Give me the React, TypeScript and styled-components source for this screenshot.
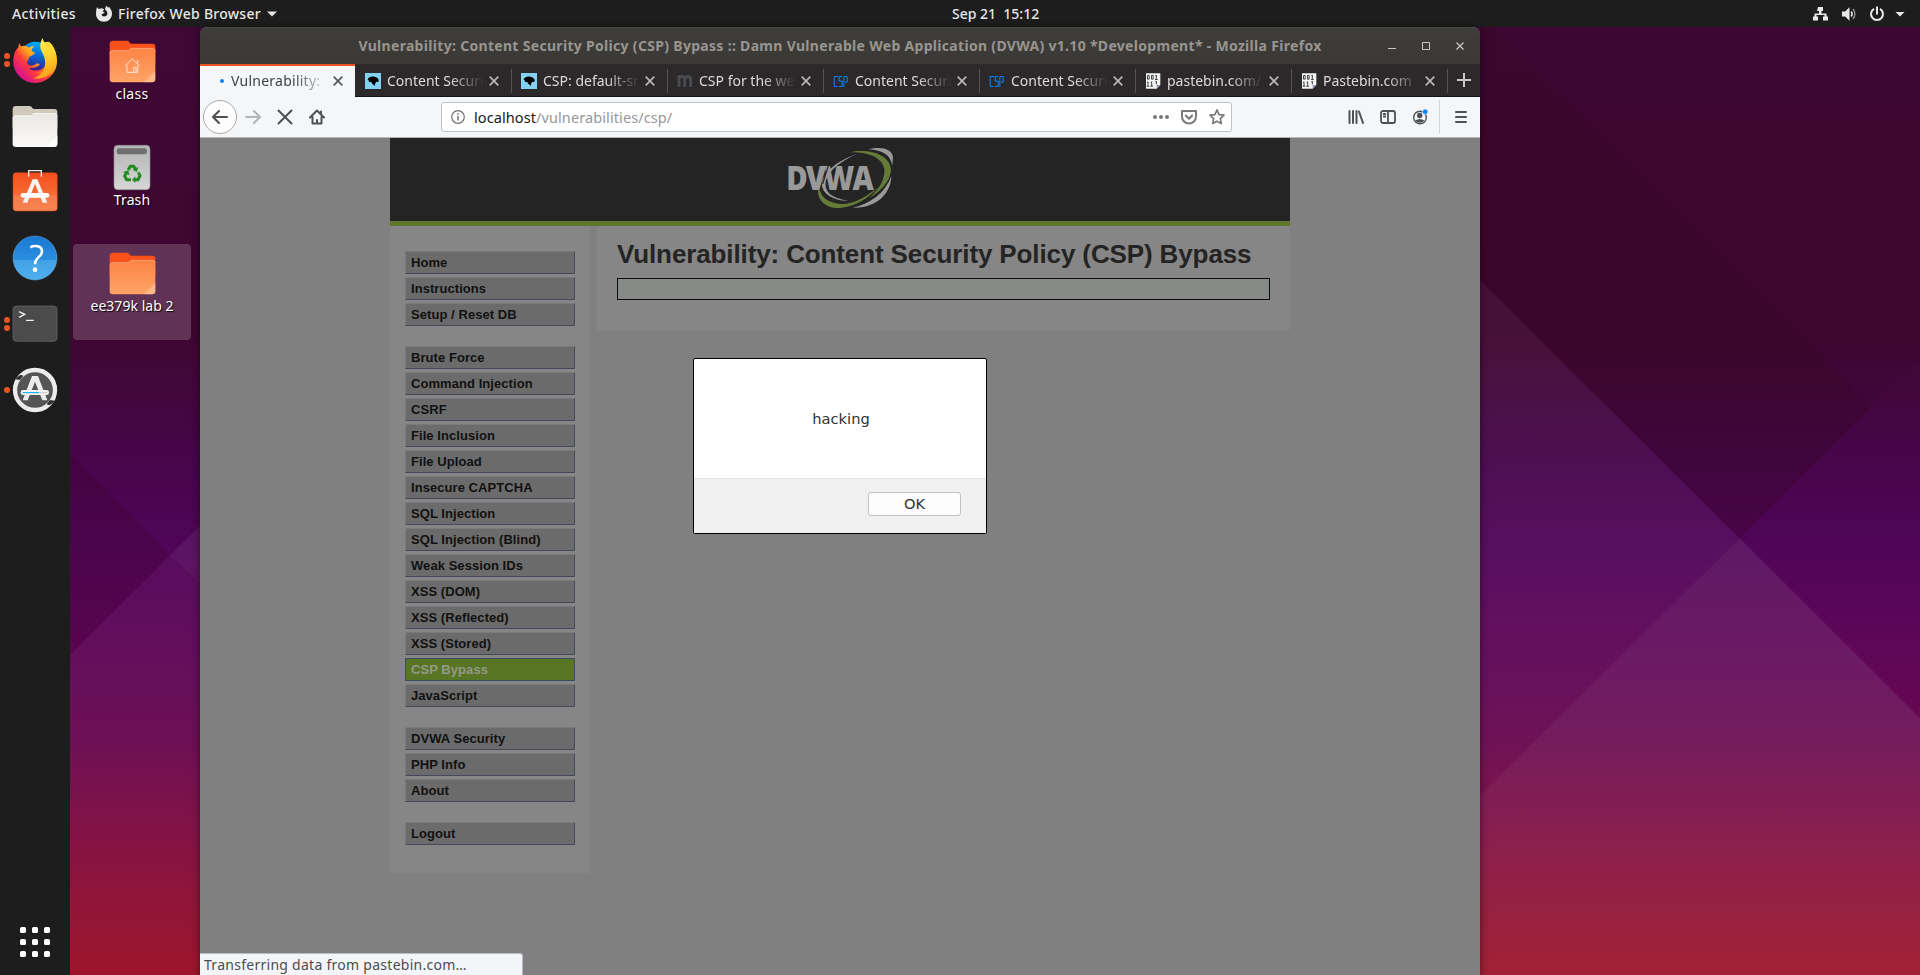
import React from "react";
import styled, { createGlobalStyle, css } from "styled-components";

const UI = `"Noto Sans", "Open Sans", sans-serif`;

const Global = createGlobalStyle`
  * { box-sizing: border-box; }
  html, body { margin: 0; padding: 0; overflow: hidden; background: #1d1d1d; }
  svg { display: block; flex: none; }
`;

/* ---------- shell ---------- */
const Screen = styled.div`
  position: relative;
  width: 1920px;
  height: 975px;
  display: flex;
  flex-direction: column;
  overflow: hidden;
  font-family: ${UI};
`;
const Wallpaper = styled.svg`
  position: absolute;
  inset: 0;
`;
const Label = styled.span<{ $ls?: number }>`
  white-space: pre;
  letter-spacing: ${(p) => p.$ls ?? 0}px;
`;

/* ---------- top bar ---------- */
const TopBar = styled.header`
  position: relative;
  display: grid;
  grid-template-columns: 940px 1fr auto;
  align-items: center;
  height: 27px;
  flex: none;
  padding: 0 13px 0 12px;
  background: #1d1d1d;
  color: #e6e6e6;
  font-size: 14px;
  font-weight: 500;
  line-height: 27px;
`;
const TopGroup = styled.div`
  display: flex;
  align-items: center;
`;
const AppMenu = styled.div`
  display: flex;
  align-items: center;
  margin-left: 20px;
  gap: 6px;
`;
const Clock = styled.div`
  white-space: pre;
`;

/* ---------- body ---------- */
const Body = styled.div`
  position: relative;
  display: flex;
  flex: 1;
  min-height: 0;
`;
const Dock = styled.nav`
  display: flex;
  flex-direction: column;
  width: 70px;
  background: #1d1d1d;
`;
const DockItem = styled.div<{ $last?: boolean; $lift?: number }>`
  display: grid;
  grid-template-columns: 13px 44px 13px;
  align-items: center;
  height: 66px;
  padding-bottom: ${(p) => p.$lift ?? 0}px;
  ${(p) => p.$last && css`margin-top: auto;`}
`;
const Dots = styled.div`
  display: flex;
  flex-direction: column;
  align-items: center;
  gap: 2px;
`;
const Dot = styled.i`
  width: 6px;
  height: 6px;
  border-radius: 50%;
  background: #e95420;
`;
const DockArt = styled.div`
  display: flex;
  justify-content: center;
`;

const Desktop = styled.div`
  display: flex;
  flex-direction: column;
  gap: 10px;
  width: 130px;
  padding: 5px 0 0 3px;
`;
const Shortcut = styled.div<{ $selected?: boolean }>`
  display: flex;
  flex-direction: column;
  align-items: center;
  width: 118px;
  height: 96px;
  padding-top: 4px;
  border-radius: 4px;
  background: ${(p) => (p.$selected ? "rgba(255,255,255,0.18)" : "transparent")};
  color: #fff;
  font-size: 14px;
  line-height: 20px;
  text-shadow: 1px 1px 1px rgba(0, 0, 0, 0.9);
`;
const ShortcutArt = styled.div`
  display: flex;
  align-items: center;
  justify-content: center;
  height: 50px;
  margin-bottom: -2px;
`;

/* ---------- browser window ---------- */
const WindowWrap = styled.div`
  display: flex;
  border-radius: 7px 7px 0 0;
  box-shadow: 0 2px 9px rgba(0, 0, 0, 0.5);
`;
const Window = styled.section`
  display: flex;
  flex-direction: column;
  width: 1280px;
  border-radius: 7px 7px 0 0;
  overflow: hidden;
  background: #808080;
`;
const TitleBar = styled.div`
  display: grid;
  grid-template-columns: 100px 1fr 100px;
  align-items: center;
  height: 37px;
  flex: none;
  padding-bottom: 2px;
  border-top: 1px solid #4a4845;
  background: linear-gradient(#3f3d39, #3b3936);
  color: #989590;
  font-size: 14px;
  font-weight: 700;
  text-align: center;
`;
const WindowButtons = styled.div`
  display: flex;
  justify-content: flex-end;
  padding: 2px 16px 0 0;
`;
const TabBar = styled.div`
  display: flex;
  height: 33px;
  flex: none;
  background: #2b292a;
  border-bottom: 1px solid #131313;
`;
const Tab = styled.div<{ $active?: boolean }>`
  display: flex;
  align-items: center;
  position: relative;
  width: 156px;
  height: 33px;
  padding: 1px 13px 0 9px;
  color: #dcdbda;
  font-size: 14px;
  &::after {
    content: "";
    position: absolute;
    right: 0;
    top: 5px;
    width: 1px;
    height: 24px;
    background: #565455;
  }
  ${(p) =>
    p.$active &&
    css`
      width: 155px;
      margin-right: 1px;
      padding: 0 12px 1px 20px;
      border-top: 2px solid #e95420;
      background: #f5f6f7;
      color: #3f4144;
      &::after { display: none; }
    `}
`;
const Favicon = styled.div`
  width: 16px;
  height: 16px;
  margin-right: 6px;
`;
const LoadDot = styled.i`
  width: 4px;
  height: 4px;
  margin-right: 7px;
  border-radius: 50%;
  background: #0a84ff;
`;
const TabText = styled.div`
  width: 97px;
  overflow: hidden;
  line-height: 22px;
  mask-image: linear-gradient(to right, #000 calc(100% - 34px), transparent);
`;
const CloseSlot = styled.div`
  margin-left: auto;
`;
const NewTab = styled.div`
  display: flex;
  align-items: center;
  justify-content: center;
  width: 32px;
`;

const Toolbar = styled.div`
  display: flex;
  align-items: center;
  height: 41px;
  flex: none;
  padding: 0 3px;
  background: #f5f6f7;
  border-bottom: 1px solid #b5b6b8;
`;
const BackButton = styled.div`
  display: grid;
  place-items: center;
  width: 34px;
  height: 34px;
  border: 1px solid #a9aaab;
  border-radius: 50%;
  background: #fdfdfd;
`;
const ToolButton = styled.div<{ $w?: number }>`
  display: grid;
  place-items: center;
  width: ${(p) => p.$w ?? 32}px;
  height: 32px;
`;
const UrlBar = styled.div`
  display: flex;
  align-items: center;
  width: 791px;
  height: 30px;
  margin-left: 108px;
  padding-left: 9px;
  border: 1px solid #bdc1c9;
  border-radius: 3px;
  background: #fff;
  font-size: 14.5px;
  color: #96989b;
`;
const Url = styled.div`
  flex: 1;
  margin-left: 9px;
  white-space: nowrap;
`;
const Host = styled(Label)`
  color: #17191c;
`;
const ToolEnd = styled.div`
  display: flex;
  align-items: center;
  margin-left: auto;
`;
const Divider = styled.i`
  width: 1px;
  height: 34px;
  margin: 0 5px 0 3px;
  background: #d4d5d8;
`;

/* ---------- page ---------- */
const Page = styled.main`
  position: relative;
  flex: 1;
  background: #808080;
  font-family: "Liberation Sans", Arial, sans-serif;
`;
const Container = styled.div`
  width: 900px;
  margin-left: 190px;
`;
const Banner = styled.div`
  display: flex;
  justify-content: center;
  height: 88px;
  padding-top: 7px;
  background: #242424;
  border-bottom: 5px solid #5e7728;
`;
const Columns = styled.div`
  display: flex;
  justify-content: space-between;
  align-items: flex-start;
`;
const Menu = styled.div`
  width: 200px;
  height: 647px;
  padding: 25px 15px 0;
  background: #868686;
`;
const MenuGroup = styled.ul`
  display: flex;
  flex-direction: column;
  gap: 3px;
  margin: 0 0 20px;
  padding: 0;
  list-style: none;
`;
const MenuItem = styled.li<{ $active?: boolean }>`
  height: 23px;
  padding-left: 5px;
  border: 1px solid;
  border-color: ${(p) => (p.$active ? "#3f4b5e" : "#7a7a7a #454a59 #454a59 #7a7a7a")};
  background: ${(p) => (p.$active ? "#587425" : "#6b6b6b")};
  color: ${(p) => (p.$active ? "#92998a" : "#111")};
  font-size: 13px;
  font-weight: 700;
  letter-spacing: 0.06px;
  line-height: 22px;
  white-space: nowrap;
`;
const Main = styled.div`
  width: 693px;
  height: 104px;
  padding: 12px 20px 0;
  background: #868686;
`;
const Heading = styled.h1`
  margin: 0;
  color: #242424;
  font-size: 26px;
  letter-spacing: -0.12px;
  line-height: 32px;
  white-space: nowrap;
`;
const Field = styled.div`
  height: 22px;
  margin-top: 8px;
  border: 1px solid #0c0c0c;
  background: #878b88;
`;
const Dialog = styled.div`
  position: absolute;
  left: 493px;
  top: 220px;
  width: 294px;
  height: 176px;
  display: flex;
  flex-direction: column;
  border: 1px solid #000;
  border-radius: 2px;
  overflow: hidden;
  background: #fff;
  color: #333;
  font: 14.67px "DejaVu Sans", sans-serif;
`;
const DialogBody = styled.div`
  display: grid;
  place-items: center;
  flex: 1;
  padding-left: 2px;
`;
const DialogFooter = styled.div`
  display: flex;
  justify-content: flex-end;
  height: 55px;
  padding: 13px 25px 0 0;
  border-top: 1px solid #e0e0e1;
  background: #f0f0f0;
`;
const OkButton = styled.div`
  width: 93px;
  height: 24px;
  border: 1px solid #bfc2cc;
  border-radius: 3px;
  background: #fdfdfd;
  text-align: center;
  line-height: 22px;
`;
const Status = styled.div`
  position: absolute;
  left: 0;
  bottom: 0;
  width: 323px;
  height: 22px;
  padding-left: 4px;
  border: 1px solid #b9bcc4;
  border-width: 1px 1px 0 0;
  border-radius: 0 3px 0 0;
  background: #f4f5f8;
  color: #4b4d50;
  font: 14px/22px ${UI};
`;

/* ---------- drawings ---------- */
const FirefoxLogo = () => (
  <svg width="46" height="47" viewBox="36 108 138 141">
    <defs>
      <linearGradient id="ffBody" x1="0.85" y1="0.1" x2="0.15" y2="0.85">
        <stop offset="0" stopColor="#ffd83a" />
        <stop offset="0.35" stopColor="#ff9a1e" />
        <stop offset="0.62" stopColor="#ff3b3c" />
        <stop offset="1" stopColor="#d8128e" />
      </linearGradient>
      <linearGradient id="ffGlobe" x1="0.6" y1="0" x2="0.4" y2="1">
        <stop offset="0" stopColor="#00b3f4" />
        <stop offset="0.5" stopColor="#0a63d8" />
        <stop offset="1" stopColor="#3a1c86" />
      </linearGradient>
      <linearGradient id="ffTail" x1="0.3" y1="0" x2="0.6" y2="1">
        <stop offset="0" stopColor="#fff44f" />
        <stop offset="0.5" stopColor="#ffd22e" />
        <stop offset="1" stopColor="#ff9a18" />
      </linearGradient>
    </defs>
    <path d="M57 126 L66 140 C80 128 130 124 146 122 C163 134 171 160 171 181 C171 217 141 246 105 246 C69 246 40 217 40 181 C40 160 46 148 55 139 Z" fill="url(#ffBody)" />
    <circle cx="106" cy="165" r="43" fill="url(#ffGlobe)" />
    <path d="M56 140 C66 132 80 132 86 140 C92 136 98 135 103 136 C97 141 94 146 95 149 C99 152 104 153 105 156 C103 162 95 163 88 168 C84 171 88 178 82 180 C79 188 86 194 95 194 C106 194 106 186 116 188 C121 190 118 194 113 195 C105 200 96 203 87 201 C94 213 112 217 130 208 L118 232 L70 228 L44 190 Z" fill="url(#ffBody)" />
    <path d="M128 111 C119 125 119 142 126 154 C136 170 139 190 131 206 C125 220 112 230 96 232 C128 238 160 222 168 192 C174 166 166 138 147 122 C151 132 151 137 149 141 C140 132 130 124 128 111 Z" fill="url(#ffTail)" />
  </svg>
);

const Folder = ({ kind }: { kind: "files" | "plain" | "home" }) => {
  const files = kind === "files";
  const id = "fold-" + kind;
  return (
    <svg width={files ? 46 : 47} height="43" viewBox="0 0 141 129">
      <defs>
        <linearGradient id={id} x1="0" y1="0" x2="0" y2="1">
          <stop offset="0" stopColor={files ? "#e9e7e2" : "#fc8344"} />
          <stop offset="1" stopColor={files ? "#fbfaf9" : "#ffa468"} />
        </linearGradient>
      </defs>
      <path d="M12 2 H54 Q60 2 62 8 L66 11 H130 Q139 11 139 20 V70 H2 V12 Q2 2 12 2 Z" fill={files ? "#cfcabb" : "#f8511a"} />
      <path d="M12 31 H56 Q62 31 66 24 H130 Q139 24 139 33 V117 Q139 127 129 127 H12 Q2 127 2 117 V41 Q2 31 12 31 Z" fill={`url(#${id})`} />
      <path d="M3 41 Q3 32 12 32 H56 Q62 32 66 25 H130 Q138 25 138 33" fill="none" stroke={files ? "#fff" : "#ffb48a"} strokeWidth="2" />
      <path d="M139 92 V117 Q139 127 129 127 H105 Z" fill="#fff" opacity={files ? 0.8 : 0.25} />
      {kind === "home" && (
        <path d="M48 78 L70 57 L92 78 M54 76 V97 H86 V76 M86 70 V60 M74 97 V82 H81 V97" fill="none" stroke="#fde6d8" strokeWidth="3" />
      )}
    </svg>
  );
};

const SoftwareLogo = () => (
  <svg width="46" height="43" viewBox="36 505 138 129">
    <defs>
      <linearGradient id="soft" x1="0" y1="0" x2="0" y2="1">
        <stop offset="0" stopColor="#f4501b" />
        <stop offset="0.58" stopColor="#f66a35" />
        <stop offset="0.6" stopColor="#f77b4a" />
        <stop offset="1" stopColor="#f68450" />
      </linearGradient>
    </defs>
    <rect x="39" y="516" width="133" height="115" rx="9" fill="url(#soft)" stroke="#c8421a" strokeWidth="1.5" />
    <path d="M86 528 V510 H124 V528" fill="none" stroke="#fbe9e1" strokeWidth="4" />
    <path d="M68 606 L98 536 H112 L142 606 H128 L105 550 L82 606 Z" fill="#f9f3f0" />
    <rect x="62" y="577" width="86" height="14" rx="7" fill="#fff" />
  </svg>
);

const HelpLogo = () => (
  <svg width="46" height="46" viewBox="36 15 138 138">
    <defs>
      <linearGradient id="help" x1="0" y1="0" x2="0" y2="1">
        <stop offset="0" stopColor="#1a78d2" />
        <stop offset="0.54" stopColor="#2b8fdf" />
        <stop offset="0.55" stopColor="#41a1e6" />
        <stop offset="1" stopColor="#4fb0ee" />
      </linearGradient>
    </defs>
    <circle cx="105" cy="84" r="66" fill="url(#help)" stroke="#69b1ea" strokeWidth="1.5" />
    <path d="M91 52 C102 46 126 46 126 64 C126 82 105 80 105 103" fill="none" stroke="#fff" strokeWidth="7.5" />
    <circle cx="105" cy="119" r="7" fill="#fff" />
  </svg>
);

const TerminalLogo = () => (
  <svg width="46" height="38" viewBox="36 226 138 114">
    <rect x="39" y="229" width="132" height="106" rx="11" fill="#4b4b4b" stroke="#6e6e6e" strokeWidth="2" />
    <path d="M57 246 L74 254 L57 263 M78 272 H101" fill="none" stroke="#f2f2f2" strokeWidth="4" />
  </svg>
);

const UpdaterLogo = () => (
  <svg width="46" height="46" viewBox="36 411 138 138">
    <circle cx="105" cy="480" r="60" fill="#555" stroke="#ececec" strokeWidth="13" />
    <path d="M42 447 L62 434 L70 437 L60 450 Z M168 513 L148 526 L140 523 L150 510 Z" fill="#333" />
    <path d="M68 511 L96 438 H114 L142 511 H127 L105 455 L83 511 Z" fill="#ececec" />
    <rect x="62" y="480" width="85" height="15" rx="7" fill="#f1f1f1" />
    <rect x="68" y="486" width="50" height="3.5" fill="#19b6ee" />
    <rect x="118" y="486" width="24" height="3.5" fill="#cfcfcf" />
  </svg>
);

const AppGrid = () => (
  <svg width="30" height="30" viewBox="0 0 30 30" fill="#fff">
    {[0, 12, 24].map((y) => [0, 12, 24].map((x) => <rect key={x + "-" + y} x={x} y={y} width="6" height="6" rx="1.6" />))}
  </svg>
);

const TrashArt = () => (
  <svg width="38" height="47" viewBox="339 431 114 141">
    <defs>
      <linearGradient id="bin" x1="0" y1="0" x2="0" y2="1">
        <stop offset="0" stopColor="#b4b4b4" />
        <stop offset="1" stopColor="#d6d6d6" />
      </linearGradient>
    </defs>
    <rect x="342" y="435" width="108" height="133" rx="11" fill="url(#bin)" stroke="#8f8f8f" strokeWidth="2" />
    <rect x="350" y="444" width="91" height="18" rx="7" fill="#6f6f6f" />
    <g fill="none" stroke="#228b22" strokeWidth="9">
      <path d="M384 509 L391 498 H401 L407 507" />
      <path d="M415 516 L420 526 L414 538 H404" />
      <path d="M393 538 H380 L374 527 L379 518" />
    </g>
    <g fill="#228b22">
      <path d="M415 500 L411 515 L398 508 Z" />
      <path d="M406 528 V548 L396 538 Z" />
      <path d="M369 515 L385 510 L388 525 Z" />
    </g>
  </svg>
);

const FirefoxGlyph = () => (
  <svg width="16" height="17" viewBox="288 14 48 51">
    <path d="M291 20 L296 26 L305 24 L313 27 L308 33 L314 37 L305 42 C304 48 312 50 318 47 C325 43 323 33 316 29 C314 24 317 19 320 16 L324 22 L327 19 C334 27 336 33 336 40 C336 54 325 64 312 64 C298 64 288 54 288 40 C288 33 289 27 291 20 Z" fill="#e8e8e8" />
  </svg>
);

const TrayIcons = () => (
  <svg width="96" height="18" viewBox="0 0 96 18" fill="#e8e8e8">
    <path d="M7 2h5v4h-1.500v2.500h5v3h1.500v4h-5v-4h1.500v-1.500h-8v1.500h1.500v4h-5v-4h1.500v-3h4.500v-2.500h-2z" />
    <path d="M31 6.500h3.200l4.300-4.300v13.600l-4.300-4.300h-3.200z" />
    <path d="M40.200 6.500q1.800 2.500 0 5" fill="none" stroke="#e8e8e8" strokeWidth="1.500" />
    <path d="M42 4q3.800 5 0 10" fill="none" stroke="#8a8a8a" strokeWidth="1.500" />
    <path d="M63 3.800a6 6 0 1 0 6 0" fill="none" stroke="#e8e8e8" strokeWidth="2" />
    <rect x="65" y="1.500" width="2" height="8" />
    <path d="M84.500 7h9l-4.500 4.500z" />
  </svg>
);

const Cross = ({ color }: { color: string }) => (
  <svg width="10" height="10" viewBox="0 0 10 10">
    <path d="M.7 .7L9.300 9.300M9.300 .7L.7 9.300" stroke={color} strokeWidth="1.7" />
  </svg>
);

const WindowControls = () => (
  <svg width="80" height="12" viewBox="0 0 80 12" fill="none" stroke="#c9c7c4">
    <path d="M4 8.500h8" />
    <path d="M38.500 2.500h7v7h-7z" />
    <path d="M72.500 2.500l7 7M79.500 2.500l-7 7" strokeWidth="1.300" />
  </svg>
);

const favicons: Record<string, React.ReactNode> = {
  dino: (
    <svg width="16" height="16" viewBox="0 0 48 48">
      <rect width="48" height="48" fill="#83d0f2" />
      <path d="M8 20 C10 12 20 9 28 11 C36 12 40 16 41 22 C42 26 38 28 36 26 C34 26 32 28 31 31 L29 39 L24 34 C20 32 19 30 20 27 C14 28 10 26 12 23 Z" fill="#000" />
    </svg>
  ),
  moz: (
    <svg width="16" height="16" viewBox="0 0 48 48">
      <path d="M6 42 V7 M6 18 Q8 10 15 10 Q23 10 23 20 V42 M23 20 Q26 10 33 10 Q41 10 41 20 V42" fill="none" stroke="#4b4a50" strokeWidth="8.500" />
    </svg>
  ),
  csp: (
    <svg width="16" height="16" viewBox="0 0 48 48" fill="none" stroke="#0a84ff" strokeWidth="3">
      <path d="M15 10.500H3.500V40.500H12M27 10.500H18.500V24.500H27.500V40.500H17M32.500 42V10.500H42.500V27.500H36" />
    </svg>
  ),
  paste: (
    <svg width="16" height="16" viewBox="0 0 48 48">
      <path d="M3 1 H46 V36 L35 47 H3 Z" fill="#f4f4f4" />
      <path d="M35 47 V36 H46 Z" fill="#8a97a8" />
      <path d="M7.500 7.500h5v11h-5zM19.500 7.500h5v11h-5zM34 6v14M31 8h3M30 19.500h8M9 26v14M6 28h3M5 39.500h8M20 26v14M17 28h3M16 39.500h8M34 24v10M31 26h3" fill="none" stroke="#2b2b2b" strokeWidth="2.600" />
    </svg>
  ),
};

const ToolSvg = ({ d, c = "#4e5053", w = 2 }: { d: string; c?: string; w?: number }) => (
  <svg width="16" height="16" viewBox="0 0 16 16" fill="none" stroke={c} strokeWidth={w} strokeLinecap="round" strokeLinejoin="round">
    <path d={d} />
  </svg>
);

const DvwaLogo = () => (
  <svg width="110" height="65" viewBox="1215 45 330 195">
    <g fill="#999">
      <path d="M1465 58 C1500 49 1536 54 1539 82 L1537 107 C1530 74 1510 61 1465 58 Z" />
      <path d="M1534 138 C1533 190 1490 236 1418 233 C1470 222 1515 190 1534 138 Z" />
      <path d="M1430 72 C1385 88 1336 116 1326 158 C1322 195 1370 213 1405 212 C1360 205 1330 190 1338 150 C1350 116 1388 92 1430 72 Z" />
      <text x="1219" y="180" fontFamily="Open Sans, sans-serif" fontWeight="800" fontSize="101" letterSpacing="-7" textLength="256" lengthAdjust="spacingAndGlyphs">DVWA</text>
    </g>
    <path d="M1346 104 L1328 162" stroke="#242424" strokeWidth="3.5" />
    <g fill="#667a38">
      <path d="M1408 67 C1465 53 1534 74 1533 121 C1530 156 1500 186 1468 204 C1500 175 1515 148 1513 118 C1508 84 1468 66 1408 67 Z" />
      <path d="M1314 180 C1313 218 1345 236 1380 234 C1430 229 1466 204 1494 172 C1455 204 1420 222 1388 222 C1350 222 1324 204 1320 181 Z" />
    </g>
  </svg>
);

const WallpaperArt = () => (
  <Wallpaper width="1920" height="975" viewBox="0 0 1920 975">
    <defs>
      <linearGradient id="wall" x1="0" y1="0" x2="0" y2="975" gradientUnits="userSpaceOnUse">
        <stop offset="0" stopColor="#3f0836" />
        <stop offset="0.34" stopColor="#3e0730" />
        <stop offset="0.4" stopColor="#42073c" />
        <stop offset="0.47" stopColor="#47054a" />
        <stop offset="0.56" stopColor="#500558" />
        <stop offset="0.66" stopColor="#5e0658" />
        <stop offset="0.76" stopColor="#68084f" />
        <stop offset="0.84" stopColor="#7c0a42" />
        <stop offset="0.92" stopColor="#8c0d33" />
        <stop offset="1" stopColor="#9b0d24" />
      </linearGradient>
    </defs>
    <rect width="1920" height="975" fill="url(#wall)" />
    <path d="M1480 16 L1872 406 L1740 538 L1480 280 Z" fill="#300a18" opacity="0.2" />
    <path d="M1480 280 L1920 718 V975 H1480 Z" fill="#fff" opacity="0.045" />
    <path d="M1480 795 L1740 538 L1920 718 V975 H1480 Z" fill="#fff" opacity="0.045" />
    <path d="M1740 538 L1920 358 V0 H1480 V280 Z" fill="#200010" opacity="0.05" />
    <path d="M70 453 L170 555 L70 655 Z" fill="#300010" opacity="0.14" />
    <path d="M70 655 L200 526 V975 H70 Z" fill="#fff" opacity="0.035" />
    <path d="M170 555 L200 526 V584 Z" fill="#fff" opacity="0.03" />
  </Wallpaper>
);

const menu = [
  ["Home", "Instructions", "Setup / Reset DB"],
  ["Brute Force", "Command Injection", "CSRF", "File Inclusion", "File Upload", "Insecure CAPTCHA", "SQL Injection", "SQL Injection (Blind)", "Weak Session IDs", "XSS (DOM)", "XSS (Reflected)", "XSS (Stored)", "CSP Bypass", "JavaScript"],
  ["DVWA Security", "PHP Info", "About"],
  ["Logout"],
];

const tabs = [
  { icon: "dino", text: "Content Securi" },
  { icon: "dino", text: "CSP: default-sr" },
  { icon: "moz", text: "CSP for the we" },
  { icon: "csp", text: "Content Securi" },
  { icon: "csp", text: "Content Securi" },
  { icon: "paste", text: "pastebin.com/" },
  { icon: "paste", text: "Pastebin.com" },
];

export default function App() {
  return (
    <Screen>
      <Global />
      <WallpaperArt />
      <TopBar>
        <TopGroup>
          <Label $ls={0.37}>Activities</Label>
          <AppMenu>
            <FirefoxGlyph />
            <Label $ls={0.27}>Firefox Web Browser</Label>
            <svg width="10" height="6" viewBox="0 0 10 6"><path d="M0 .5h10l-5 5z" fill="#e6e6e6" /></svg>
          </AppMenu>
        </TopGroup>
        <Clock><Label>{"Sep 21  15:12"}</Label></Clock>
        <TrayIcons />
      </TopBar>
      <Body>
        <Dock>
          <DockItem><Dots><Dot /><Dot /></Dots><DockArt><FirefoxLogo /></DockArt></DockItem>
          <DockItem><Dots /><DockArt><Folder kind="files" /></DockArt></DockItem>
          <DockItem $lift={4}><Dots /><DockArt><SoftwareLogo /></DockArt></DockItem>
          <DockItem><Dots /><DockArt><HelpLogo /></DockArt></DockItem>
          <DockItem><Dots><Dot /><Dot /></Dots><DockArt><TerminalLogo /></DockArt></DockItem>
          <DockItem><Dots><Dot /></Dots><DockArt><UpdaterLogo /></DockArt></DockItem>
          <DockItem $last><Dots /><DockArt><AppGrid /></DockArt></DockItem>
        </Dock>
        <Desktop>
          <Shortcut><ShortcutArt><Folder kind="home" /></ShortcutArt><Label $ls={0.3}>class</Label></Shortcut>
          <Shortcut><ShortcutArt><TrashArt /></ShortcutArt><Label $ls={0.1}>Trash</Label></Shortcut>
          <Shortcut $selected><ShortcutArt><Folder kind="plain" /></ShortcutArt><Label $ls={0.03}>ee379k lab 2</Label></Shortcut>
        </Desktop>
        <WindowWrap>
          <Window>
            <TitleBar>
              <span />
              <Label $ls={0.31}>Vulnerability: Content Security Policy (CSP) Bypass :: Damn Vulnerable Web Application (DVWA) v1.10 *Development* - Mozilla Firefox</Label>
              <WindowButtons><WindowControls /></WindowButtons>
            </TitleBar>
            <TabBar>
              <Tab $active>
                <LoadDot />
                <TabText><Label $ls={0.25}>Vulnerability:</Label></TabText>
                <CloseSlot><Cross color="#56585b" /></CloseSlot>
              </Tab>
              {tabs.map((t, i) => (
                <Tab key={i}>
                  <Favicon>{favicons[t.icon]}</Favicon>
                  <TabText><Label>{t.text}</Label></TabText>
                  <CloseSlot><Cross color="#b9b8b7" /></CloseSlot>
                </Tab>
              ))}
              <NewTab>
                <svg width="14" height="14" viewBox="0 0 14 14"><path d="M7 0v14M0 7h14" stroke="#c9c8c7" strokeWidth="2" /></svg>
              </NewTab>
            </TabBar>
            <Toolbar>
              <BackButton><ToolSvg d="M15 8H1.500M7 2L1 8l6 6" /></BackButton>
              <ToolButton><ToolSvg c="#b2b4b6" d="M1 8h13.500M9 2l6 6-6 6" /></ToolButton>
              <ToolButton><ToolSvg d="M1.500 1.500l13 13M14.500 1.500l-13 13" /></ToolButton>
              <ToolButton><ToolSvg d="M1 8.500L8 1.500l7 7M3.500 8v6.500h9V8M12 2.500v2M8 14v-3" /></ToolButton>
              <UrlBar>
                <svg width="14" height="14" viewBox="0 0 14 14" fill="none" stroke="#6f7174">
                  <circle cx="7" cy="7" r="6.300" strokeWidth="1.200" />
                  <path d="M7 6v4.500M7 3.200v1.500" strokeWidth="1.500" />
                </svg>
                <Url><Host $ls={0.08}>localhost</Host><Label $ls={0.1}>/vulnerabilities/csp/</Label></Url>
                <ToolButton $w={28}>
                  <svg width="16" height="16" viewBox="0 0 16 16" fill="#77797c"><circle cx="2" cy="8" r="2" /><circle cx="8" cy="8" r="2" /><circle cx="14" cy="8" r="2" /></svg>
                </ToolButton>
                <ToolButton $w={28}><ToolSvg c="#77797c" d="M1 2h14v5.500a7 7 0 0 1-14 0zM4.800 6.500L8 9.700l3.200-3.200" /></ToolButton>
                <ToolButton $w={28}><ToolSvg c="#77797c" w={1.7} d="M8 1l2.100 4.600 4.900.6-3.600 3.400.9 5L8 12.200 3.700 14.600l.9-5L1 6.200l4.900-.6z" /></ToolButton>
              </UrlBar>
              <ToolEnd>
                <ToolButton><ToolSvg d="M1.500 2v12M5 2v12M8.500 2v12M11 2.500l4 11.500" /></ToolButton>
                <ToolButton><ToolSvg w={1.8} d="M3 2h10a2 2 0 0 1 2 2v8a2 2 0 0 1-2 2H3a2 2 0 0 1-2-2V4a2 2 0 0 1 2-2zM8 2v12M3.700 5h1.600M3.700 7.500h1.600" /></ToolButton>
                <ToolButton>
                  <svg width="16" height="16" viewBox="0 0 16 16">
                    <circle cx="8" cy="8.500" r="6.300" fill="none" stroke="#4e5053" strokeWidth="1.400" />
                    <circle cx="7.700" cy="6.500" r="2.700" fill="#4e5053" />
                    <path d="M3 11.500q4.700-3 9.500 0-4.700 4.500-9.500 0z" fill="#4e5053" />
                    <circle cx="13.200" cy="2.800" r="2.700" fill="#0a84ff" stroke="#f5f6f7" strokeWidth=".6" />
                  </svg>
                </ToolButton>
                <Divider />
                <ToolButton><ToolSvg d="M3 3h10M3 8h10M3 13h10" /></ToolButton>
              </ToolEnd>
            </Toolbar>
            <Page>
              <Container>
                <Banner><DvwaLogo /></Banner>
                <Columns>
                  <Menu>
                    {menu.map((group, i) => (
                      <MenuGroup key={i}>
                        {group.map((m) => <MenuItem key={m} $active={m === "CSP Bypass"}>{m}</MenuItem>)}
                      </MenuGroup>
                    ))}
                  </Menu>
                  <Main>
                    <Heading>Vulnerability: Content Security Policy (CSP) Bypass</Heading>
                    <Field />
                  </Main>
                </Columns>
              </Container>
              <Dialog>
                <DialogBody>hacking</DialogBody>
                <DialogFooter><OkButton>OK</OkButton></DialogFooter>
              </Dialog>
              <Status><Label $ls={0.27}>Transferring data from pastebin.com…</Label></Status>
            </Page>
          </Window>
        </WindowWrap>
      </Body>
    </Screen>
  );
}
